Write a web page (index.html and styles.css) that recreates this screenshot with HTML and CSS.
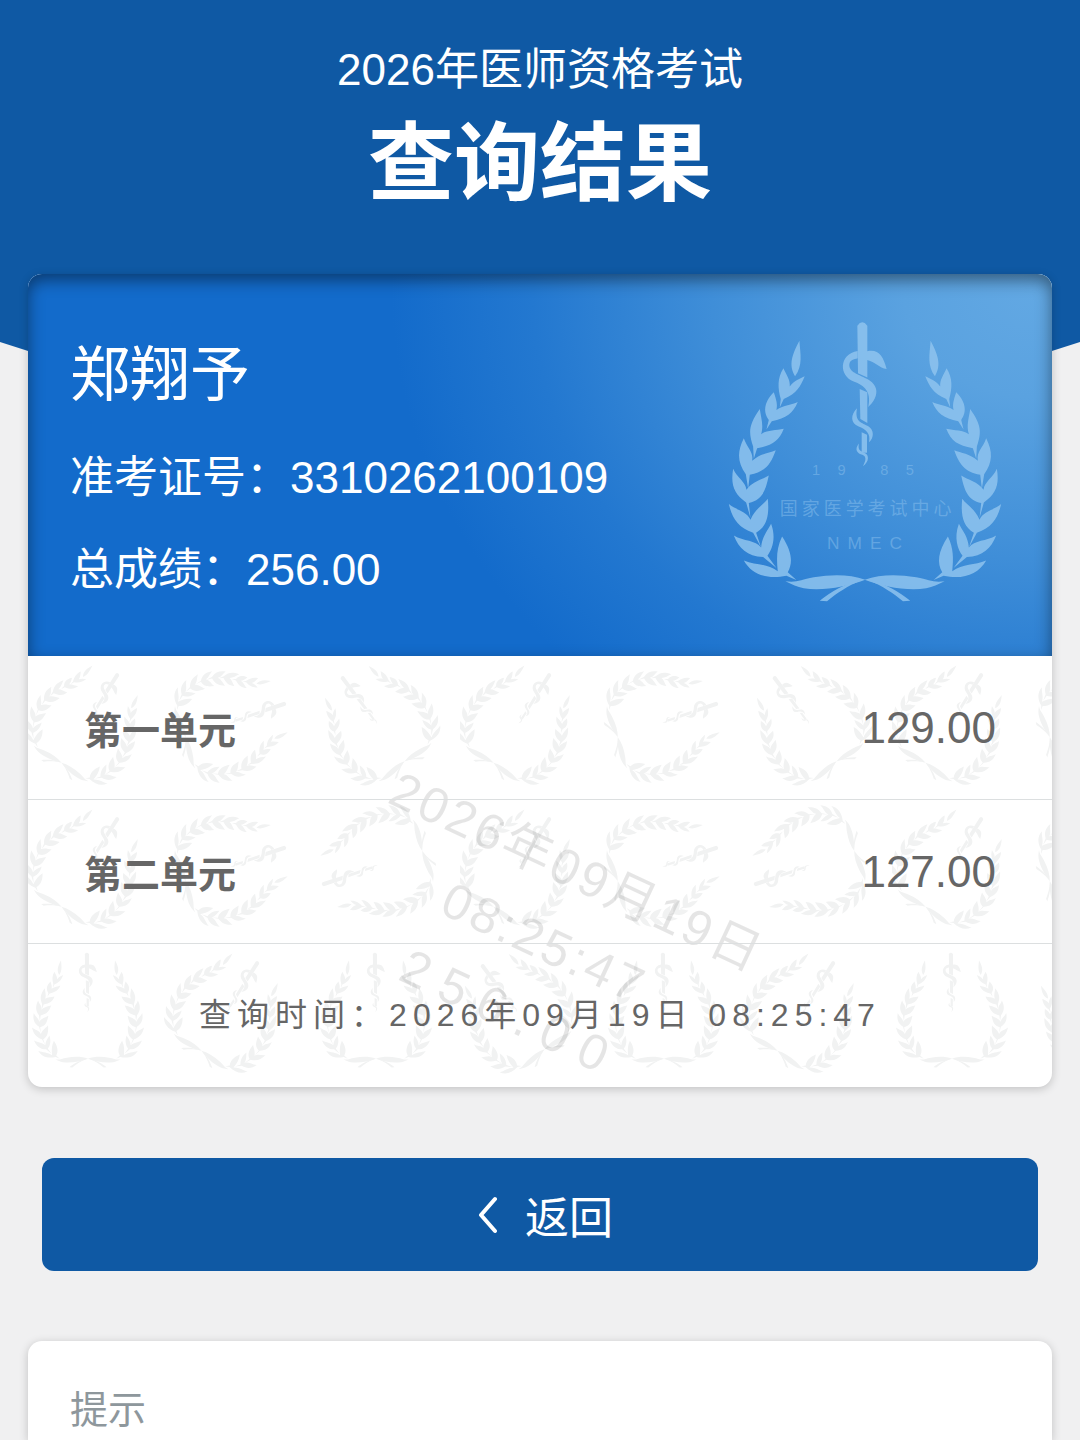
FILE: index.html
```html
<!DOCTYPE html>
<html lang="zh-CN">
<head>
    <meta charset="UTF-8">
    <meta name="viewport" content="width=device-width, initial-scale=1.0">
    <title>查询结果</title>
    <link rel="stylesheet" href="styles.css">
</head>
<body>
    <!-- shared emblem shapes -->
    <svg class="defs" aria-hidden="true">
        <defs>
            <g id="branch">
                <path d="M297 247C300 290 308 320 284 354C268 325 268 300 297 247Z"/>
                <path d="M249 330C258 350 270 365 268 385C280 368 300 360 313 354C300 385 290 405 250 422L238 448L241 422C232 390 230 360 249 330Z"/>
                <path d="M220 402C228 425 232 440 228 455C250 440 275 440 292 431C278 465 258 480 214 489L198 514L205 485C190 465 187 435 220 402Z"/>
                <path d="M178 452C182 480 190 500 182 528C200 515 225 518 250 512C235 550 215 562 170 570L160 602L158 565C143 520 145 500 178 452Z"/>
                <path d="M130 540C140 570 160 580 155 608C180 585 205 585 226 576C210 620 195 640 148 650L143 692L136 648C110 612 110 580 130 540Z"/>
                <path d="M98 632C110 660 135 670 138 695C155 670 185 665 205 652C195 700 185 725 145 735L150 780L137 733C100 707 90 680 98 632Z"/>
                <path d="M85 738C105 755 140 760 150 785C165 750 190 740 202 722C207 770 200 805 167 824L182 868L158 824C112 808 95 780 85 738Z"/>
                <path d="M100 832C130 850 165 845 182 868C185 835 200 820 212 797C228 840 215 875 201 893L228 930L188 897C140 895 115 870 100 832Z"/>
                <path d="M130 907C165 922 200 915 232 940C228 900 228 870 245 835C275 880 278 915 262 943L288 966L258 953C200 965 155 950 130 907Z"/>
                <path d="M255 970C290 975 300 965 340 958C400 948 450 950 495 965C440 985 370 1000 310 991C290 987 275 980 255 970Z"/>
                <path d="M484 966C440 985 410 1005 380 1030L358 1028C395 1000 430 978 484 966Z"/>
            </g>
            <g id="emblem">
                <use href="#branch"/>
                <use href="#branch" transform="translate(988 0) scale(-1 1)"/>
                <g class="staff">
                    <path d="M471 202Q486 182 501 202V358L473 345ZM478 392L501 402V494L480 482ZM484 522L500 530V584H484Z"/>
                    <path d="M500 279C535 272 548 292 559 332C538 330 520 308 500 305Z"/>
                    <path d="M472 278C415 288 415 352 460 370C492 382 514 400 504 446C532 420 538 388 510 368C484 350 444 345 447 318C449 304 460 304 472 300Z"/>
                    <path d="M470 450C450 470 450 495 475 505C495 513 512 525 506 552C522 540 521 515 505 505C485 493 462 492 470 450Z"/>
                    <path d="M476 556C460 575 472 586 486 590C498 595 498 605 488 624C506 612 508 590 492 584C478 578 472 574 476 556Z"/>
                </g>
            </g>
            <pattern id="rowOne" class="tile" width="432" height="144" patternUnits="userSpaceOnUse">
                <use href="#emblem" transform="translate(60 66) rotate(33) scale(.137) translate(-494 -610)"/>
                <use href="#emblem" transform="translate(204 66) rotate(72) scale(.137) translate(-494 -610)"/>
                <use href="#emblem" transform="translate(348 66) rotate(-36) scale(.137) translate(-494 -610)"/>
            </pattern>
            <pattern id="rowTwo" class="tile" y="144" width="432" height="144" patternUnits="userSpaceOnUse">
                <use href="#emblem" transform="translate(60 66) rotate(33) scale(.137) translate(-494 -610)"/>
                <use href="#emblem" transform="translate(204 66) rotate(72) scale(.137) translate(-494 -610)"/>
                <use href="#emblem" transform="translate(348 66) rotate(-108) scale(.137) translate(-494 -610)"/>
            </pattern>
            <pattern id="rowThree" class="tile" y="288" width="576" height="144" patternUnits="userSpaceOnUse">
                <use href="#emblem" transform="translate(60 66) scale(.137) translate(-494 -610)"/>
                <use href="#emblem" transform="translate(200 66) rotate(33) scale(.137) translate(-494 -610)"/>
                <use href="#emblem" transform="translate(348 66) scale(.137) translate(-494 -610)"/>
                <use href="#emblem" transform="translate(488 66) rotate(-36) scale(.137) translate(-494 -610)"/>
            </pattern>
        </defs>
    </svg>

    <header class="header">
        <p class="exam-name">2026年医师资格考试</p>
        <h1>查询结果</h1>
    </header>

    <main class="content">
        <section class="card result">
            <div class="summary">
                <div class="info">
                    <h2>郑翔予</h2>
                    <p>准考证号：3310262100109</p>
                    <p>总成绩：256.00</p>
                </div>
                <svg class="emblem" viewBox="80 185 825 850" aria-hidden="true">
                    <use href="#emblem"/>
                    <g class="emblem-text">
                        <text x="335" y="650" font-size="44" letter-spacing="52">19</text>
                        <text x="540" y="650" font-size="44" letter-spacing="52">85</text>
                        <text x="238" y="772" font-size="54" letter-spacing="12">国家医学考试中心</text>
                        <text x="380" y="874" font-size="52" letter-spacing="24">NMEC</text>
                    </g>
                </svg>
            </div>

            <div class="detail">
                <svg class="pattern" aria-hidden="true">
                    <rect width="100%" height="144" fill="url(#rowOne)"/>
                    <rect y="144" width="100%" height="144" fill="url(#rowTwo)"/>
                    <rect y="288" width="100%" height="144" fill="url(#rowThree)"/>
                </svg>
                <div class="watermark" aria-hidden="true">
                    <div>2026年09月19日</div>
                    <div>08:25:47</div>
                    <div class="wide">256.00</div>
                </div>
                <table class="scores">
                    <tr>
                        <th scope="row">第一单元</th>
                        <td>129.00</td>
                    </tr>
                    <tr>
                        <th scope="row">第二单元</th>
                        <td>127.00</td>
                    </tr>
                </table>
                <p class="query-time">查询时间：2026年09月19日 08:25:47</p>
            </div>
        </section>

        <button class="back" type="button">
            <svg width="22" height="40" viewBox="0 0 22 40" aria-hidden="true">
                <path d="M20 4L6 20L20 36"/>
            </svg>
            返回
        </button>

        <section class="card tips">
            <h3>提示</h3>
        </section>
    </main>
</body>
</html>
```

FILE: styles.css
```css
* {
    box-sizing: border-box;
}
body {
    display: flex;
    flex-direction: column;
    min-height: 100vh;
    margin: 0;
    background-color: #f0f0f1;
    font-family: "Liberation Sans", "Noto Sans CJK SC", sans-serif;
    font-size: 44px;
    color: #666;
}
h1, h2, h3, p {
    margin: 0;
    font-weight: normal;
}
.defs {
    position: absolute;
    width: 0;
    height: 0;
}

/* blue banner with a pointed bottom edge behind the card */
.header {
    padding: 38px 28px 289px;
    background-color: #0f59a4;
    clip-path: polygon(0 0, 100% 0, 100% 342px, 50% 100%, 0 342px);
    color: #fff;
    text-align: center;
}
.exam-name {
    line-height: 64px;
}
h1 {
    font-size: 86px;
    font-weight: bold;
    line-height: 124px;
}

.content {
    flex: 1;
    display: flex;
    flex-direction: column;
    margin-top: -241px;
    padding: 0 28px;
    position: relative;
}
.card {
    background-color: #fff;
    border-radius: 14px;
    box-shadow: 0 2px 10px rgba(0, 0, 0, 0.2);
}
.summary {
    display: flex;
    justify-content: space-between;
    align-items: flex-start;
    min-height: 382px;
    padding: 46px 50px 0 42px;
    border-radius: 14px 14px 0 0;
    background: radial-gradient(ellipse 640px 540px at 98% 4%, #62a8e3, #5aa2e0 20%, #3f8ed8 50%, #2378d0 78%, #136bcb) #136bcb;
    box-shadow: inset 0 6px 16px rgba(0, 0, 0, 0.45);
    color: #fff;
}
.info h2 {
    font-size: 60px;
    line-height: 112px;
}
.info p {
    line-height: 92px;
}
.emblem {
    width: 275px;
    height: 283px;
    fill: #8fc4ef;
    opacity: 0.85;
}
.emblem-text {
    opacity: 0.55;
}

.detail {
    position: relative;
}
.pattern {
    position: absolute;
    top: 0;
    left: 0;
    width: 100%;
    height: 100%;
}
.tile {
    fill: #f1f2f2;
}
.watermark {
    position: absolute;
    top: 170px;
    left: 50%;
    width: 440px;
    margin-left: -216px;
    font-size: 50px;
    line-height: 78px;
    letter-spacing: 3px;
    text-align: center;
    color: rgba(0, 0, 0, 0.1);
    transform: rotate(25deg);
}
.watermark .wide {
    letter-spacing: 14px;
}
.scores {
    position: relative;
    width: 100%;
    border-collapse: separate;
    border-spacing: 0;
}
.scores th, .scores td {
    height: 144px;
    padding: 0 56px;
    border-bottom: 1px solid #dcdfe0;
}
.scores th {
    font-size: 38px;
    text-align: left;
}
.scores td {
    text-align: right;
}
.query-time {
    position: relative;
    font-size: 32px;
    line-height: 143px;
    letter-spacing: 6px;
    text-align: center;
}

.back {
    display: flex;
    justify-content: center;
    align-items: center;
    gap: 28px;
    height: 113px;
    margin: 71px 14px 70px;
    padding: 0 0 0 8px;
    border: none;
    border-radius: 12px;
    background-color: #0f59a4;
    color: #fff;
    font: inherit;
    cursor: pointer;
}
.back svg {
    fill: none;
    stroke: #fff;
    stroke-width: 4;
    stroke-linecap: round;
    stroke-linejoin: round;
}

.tips {
    flex: 1;
    padding: 40px 42px 0;
    border-radius: 14px 14px 0 0;
}
.tips h3 {
    font-size: 38px;
    line-height: 59px;
    color: #8e979c;
}
```
